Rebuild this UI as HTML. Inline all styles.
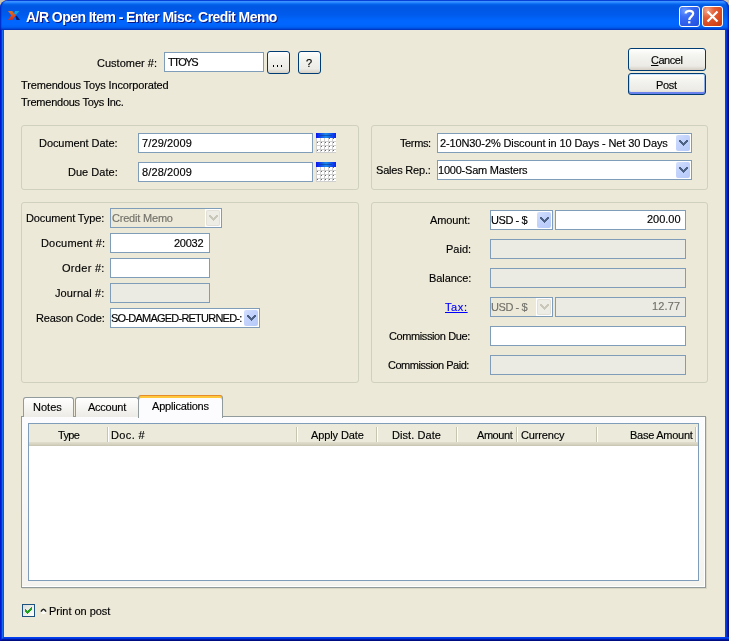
<!DOCTYPE html>
<html><head><meta charset="utf-8"><style>
*{margin:0;padding:0;box-sizing:border-box}
html,body{width:729px;height:641px;overflow:hidden;background:#c8c2ae}
body{position:relative;font-family:"Liberation Sans",sans-serif;font-size:11px;color:#000}
.a{position:absolute}
#win{position:absolute;left:0;top:0;width:729px;height:641px;border-radius:8px 8px 0 0;overflow:hidden;
 background:linear-gradient(to right,#0019cf 0,#0019cf 1px,#0831d9 1px,#0831d9 2px,#166aee 2px,#166aee 3px,#0855dd 3px,#0855dd 4px,transparent 4px,transparent 725px,#0040f0 725px,#0040f0 726px,#0036dc 726px,#0036dc 727px,#0018a8 727px,#0018a8 728px,#000d80 728px)}
#title{position:absolute;left:0;top:0;width:729px;height:30px;background:linear-gradient(to bottom,#0841d8 0px,#0841d8 1px,#3a92ff 1px,#3a92ff 2px,#2a86ff 2px,#2a86ff 3px,#1272f6 3px,#1272f6 4px,#0462ea 4px,#0462ea 5px,#005be5 5px,#005be5 6px,#0058e4 6px,#0058e4 7px,#0057e4 7px,#0057e4 8px,#0057e5 8px,#0057e5 9px,#0058e6 9px,#0058e6 10px,#0058e7 10px,#0058e7 11px,#0059e8 11px,#0059e8 12px,#005ae9 12px,#005ae9 13px,#005aeb 13px,#005aeb 14px,#005bec 14px,#005bec 15px,#005cee 15px,#005cee 16px,#005ef1 16px,#005ef1 17px,#0060f4 17px,#0060f4 18px,#0062f8 18px,#0062f8 19px,#0064fb 19px,#0064fb 20px,#0066fe 20px,#0066fe 21px,#0066ff 21px,#0066ff 22px,#0066ff 22px,#0066ff 23px,#0066ff 23px,#0066ff 24px,#0066fe 24px,#0066fe 25px,#0064fb 25px,#0064fb 26px,#0062f6 26px,#0062f6 27px,#005aec 27px,#005aec 28px,#004cdc 28px,#004cdc 29px,#0038c4 29px,#0038c4 30px)}
#titletxt{position:absolute;left:26px;top:9px;font-weight:bold;font-size:14px;letter-spacing:-0.55px;color:#fff;white-space:nowrap;text-shadow:1px 1px 0 #0a1883;line-height:16px;will-change:transform}
#bottom{position:absolute;left:0;top:637px;width:729px;height:4px;clip-path:polygon(4px 0,100% 0,100% 100%,0 100%);background:linear-gradient(to bottom,#0040f0 0,#0040f0 1px,#0036dc 1px,#0036dc 2px,#0018a8 2px,#0018a8 3px,#000d80 3px)}
#client{position:absolute;left:4px;top:30px;width:721px;height:607px;background:#ece9d8}
.t{position:absolute;white-space:nowrap;line-height:13px;font-size:11px;letter-spacing:-0.2px;will-change:transform;-webkit-text-stroke:0.15px currentColor}
.grp{position:absolute;border:1px solid #d0d0bf;border-radius:3px}
.inp{position:absolute;background:#fff;border:1px solid #7f9db9}
.dis{background:#ebebe4}
.disc{background:#ece9d8}
.btn{position:absolute;border:1px solid #003c74;border-radius:3px;background:linear-gradient(to bottom,#fff 0,#f4f4f0 30%,#ecebe6 80%,#d6d0c5 100%);text-align:center}
.def{box-shadow:inset 0 1px 0 #cee7ff,inset 0 -2px 0 #6982ee,inset 1px 0 0 #bcd4f6,inset -1px 0 0 #89ade4}
.cal{width:20px;height:20px;background:
 linear-gradient(to bottom,#0a20e8 0,#1a70f0 2px,#0a40f0 4px,transparent 4px),
 repeating-linear-gradient(to right,#b9b9b9 0,#b9b9b9 1px,transparent 1px,transparent 4px),
 repeating-linear-gradient(to bottom,#fff 0,#fff 3px,#b9b9b9 3px,#b9b9b9 4px)}
.cbb{width:14px;height:16px;border-radius:2px;background:linear-gradient(135deg,#d4e0fd 0,#c3d3fc 40%,#b6c9f8 100%)}
.cbbd{width:14px;height:16px;border-radius:2px;background:#eeede5;box-shadow:inset 0 0 0 1px #e3e1d7}
.pane{border:1px solid #919b9c;background:linear-gradient(to bottom,#fcfcfe,#f4f3ee);box-shadow:inset -1px -1px 0 #fff,1px 1px 0 #d9d6c6}
.tab{border:1px solid #919b9c;border-bottom:none;border-radius:3px 3px 0 0;background:linear-gradient(to bottom,#fff,#ecebe6)}
.tabs{border:1px solid #919b9c;border-bottom:none;border-top:none;border-radius:3px 3px 0 0;background:#fcfcfe;box-shadow:inset 0 1px 0 #e68b2c,inset 0 2px 0 #ffc73c,inset 0 3px 0 #ffc73c}
.hdr{background:linear-gradient(to bottom,#ebeadb 0,#ebeadb 18px,#e2decd 18px,#d9d5c3 20px,#c6c3b2 22px)}
.sep{top:427px;width:2px;height:15px;border-left:1px solid #c7c5b2;background:#fff}
.chk{width:13px;height:13px;border:1px solid #1c5180;background:linear-gradient(135deg,#dcdcd7,#fff)}
.capb{position:absolute;width:21px;height:21px;border:1px solid #fff;border-radius:3px}
</style></head><body>
<div id="win"><div id="title"></div>
<div class="a" style="left:0;top:0;width:729px;height:30px;border-radius:8px 8px 0 0;box-shadow:inset 1px 0 0 rgba(0,20,180,0.55),inset 2px 0 0 rgba(0,30,200,0.25),inset -1px 0 0 rgba(0,20,180,0.6),inset -2px 0 0 rgba(0,30,200,0.3)"></div>
<div id="titletxt">A/R Open Item - Enter Misc. Credit Memo</div>
<svg class="a" style="left:0;top:0" width="30" height="30" viewBox="0 0 30 30">
  <defs><linearGradient id="og" x1="0" y1="0" x2="0" y2="1"><stop offset="0" stop-color="#e07420"/><stop offset="1" stop-color="#d42a1a"/></linearGradient></defs>
  <polygon points="8,11 12.2,11 15.8,15.5 12.2,20 8,20 11.3,15.5" fill="url(#og)"/>
  <polygon points="15,11 19.5,11 16,15 14,13.5" fill="#14a0d8"/>
  <polygon points="15.5,16.5 16.8,15.8 20,20 16.5,20" fill="#0a1a70"/>
 </svg>
 <div class="capb" style="left:679px;top:6px;background:radial-gradient(circle at 25% 20%,#6b9bff 0,#3d6ef5 30%,#2a5ae8 70%,#2350d8 100%)"></div>
 <svg class="a" style="left:679px;top:6px" width="21" height="21" viewBox="0 0 21 21"><path d="M6.6,7.6 C6.6,3.9 14.2,3.9 14.2,7.6 C14.2,10.2 10.3,10.6 10.3,14" fill="none" stroke="#fff" stroke-width="2.2"/><rect x="9.1" y="15.2" width="2.3" height="2.2" fill="#fff"/></svg>
 <div class="capb" style="left:702px;top:6px;background:radial-gradient(circle at 22% 18%,#f2a58a 0,#e45c34 35%,#d8461c 70%,#c43a0e 100%)"></div>
 <svg class="a" style="left:702px;top:6px" width="21" height="21" viewBox="0 0 21 21"><path d="M5.5,5.5 L15.5,15.5 M15.5,5.5 L5.5,15.5" stroke="#fff" stroke-width="2.2"/></svg>
<div id="client"></div><div id="bottom"></div></div>
<div id="kCustomer67" class="t" style="right:572.42px;top:57px;letter-spacing:0.010px;">Customer #:</div>
<div class="inp" style="left:164px;top:52px;width:100px;height:20px;"></div>
<div id="kTTOYS66" class="t" style="left:167.86px;top:56px;letter-spacing:-1.475px;">TTOYS</div>
<div class="btn" style="left:267px;top:51px;width:23px;height:23px;"></div>
<div class="a" style="left:273px;top:65px;width:1px;height:2px;background:#000"></div><div class="a" style="left:277px;top:65px;width:1px;height:2px;background:#000"></div><div class="a" style="left:281px;top:65px;width:1px;height:2px;background:#000"></div>
<div class="btn" style="left:298px;top:51px;width:23px;height:23px;"></div>
<div id="k67" class="t" style="left:306.00px;top:57px;letter-spacing:-0.200px;">?</div>
<div id="kTremendousToysIncorp89" class="t" style="left:21.14px;top:79px;letter-spacing:-0.147px;">Tremendous Toys Incorporated</div>
<div id="kTremendousToysInc106" class="t" style="left:21.42px;top:96px;letter-spacing:-0.247px;">Tremendous Toys Inc.</div>
<div class="btn" style="left:628px;top:48px;width:78px;height:23px;"></div>
<div id="kuCuancel64" class="t" style="left:650.79px;top:54px;letter-spacing:-0.476px;"><u>C</u>ancel</div>
<div class="btn def" style="left:628px;top:73px;width:78px;height:22px;"></div>
<div id="kPost89" class="t" style="left:655.65px;top:79px;letter-spacing:-0.300px;">Post</div>
<div class="grp" style="left:21px;top:125px;width:338px;height:65px;"></div>
<div id="kDocumentDate147" class="t" style="right:611.05px;top:137px;letter-spacing:-0.066px;">Document Date:</div>
<div class="inp" style="left:138px;top:133px;width:175px;height:20px;"></div>
<div id="k7292009147" class="t" style="left:142.00px;top:137px;letter-spacing:0.115px;">7/29/2009</div>
<svg class="a" style="left:316px;top:133px" width="20" height="20" shape-rendering="crispEdges"><defs><linearGradient id="cgh" x1="0" y1="0" x2="1" y2="0"><stop offset="0" stop-color="#0a14ee"/><stop offset="0.5" stop-color="#1c8ce8"/><stop offset="1" stop-color="#0a20f0"/></linearGradient></defs><rect x="0" y="0" width="20" height="20" fill="#fff"/><rect x="0" y="0" width="20" height="5" fill="url(#cgh)"/><rect x="3" y="2" width="13" height="1" fill="#0a3a90" opacity="0.6"/><rect x="0" y="5" width="1" height="15" fill="#cfcfcf"/><rect x="4" y="5" width="1" height="15" fill="#cfcfcf"/><rect x="8" y="5" width="1" height="15" fill="#cfcfcf"/><rect x="12" y="5" width="1" height="15" fill="#cfcfcf"/><rect x="16" y="5" width="1" height="15" fill="#cfcfcf"/><rect x="0" y="8" width="20" height="1" fill="#cfcfcf"/><rect x="0" y="12" width="20" height="1" fill="#cfcfcf"/><rect x="0" y="16" width="20" height="1" fill="#cfcfcf"/><rect x="0" y="19" width="20" height="1" fill="#cfcfcf"/><rect x="13" y="5" width="1" height="1" fill="#6a6a6a"/><rect x="17" y="5" width="1" height="1" fill="#6a6a6a"/><rect x="1" y="9" width="1" height="1" fill="#6a6a6a"/><rect x="5" y="9" width="1" height="1" fill="#6a6a6a"/><rect x="9" y="9" width="1" height="1" fill="#6a6a6a"/><rect x="13" y="9" width="1" height="1" fill="#6a6a6a"/><rect x="17" y="9" width="1" height="1" fill="#6a6a6a"/><rect x="5" y="13" width="1" height="1" fill="#6a6a6a"/><rect x="9" y="13" width="1" height="1" fill="#6a6a6a"/><rect x="13" y="13" width="1" height="1" fill="#6a6a6a"/><rect x="17" y="13" width="1" height="1" fill="#6a6a6a"/><rect x="1" y="17" width="1" height="1" fill="#6a6a6a"/><rect x="5" y="17" width="1" height="1" fill="#6a6a6a"/><rect x="9" y="17" width="1" height="1" fill="#6a6a6a"/><rect x="13" y="17" width="1" height="1" fill="#6a6a6a"/><rect x="17" y="17" width="1" height="1" fill="#6a6a6a"/></svg>
<div id="kDueDate176" class="t" style="right:611.05px;top:166px;letter-spacing:0.025px;">Due Date:</div>
<div class="inp" style="left:138px;top:162px;width:175px;height:20px;"></div>
<div id="k8282009176" class="t" style="left:142.00px;top:166px;letter-spacing:0.115px;">8/28/2009</div>
<svg class="a" style="left:316px;top:162px" width="20" height="20" shape-rendering="crispEdges"><defs><linearGradient id="cgh2" x1="0" y1="0" x2="1" y2="0"><stop offset="0" stop-color="#0a14ee"/><stop offset="0.5" stop-color="#1c8ce8"/><stop offset="1" stop-color="#0a20f0"/></linearGradient></defs><rect x="0" y="0" width="20" height="20" fill="#fff"/><rect x="0" y="0" width="20" height="5" fill="url(#cgh2)"/><rect x="3" y="2" width="13" height="1" fill="#0a3a90" opacity="0.6"/><rect x="0" y="5" width="1" height="15" fill="#cfcfcf"/><rect x="4" y="5" width="1" height="15" fill="#cfcfcf"/><rect x="8" y="5" width="1" height="15" fill="#cfcfcf"/><rect x="12" y="5" width="1" height="15" fill="#cfcfcf"/><rect x="16" y="5" width="1" height="15" fill="#cfcfcf"/><rect x="0" y="8" width="20" height="1" fill="#cfcfcf"/><rect x="0" y="12" width="20" height="1" fill="#cfcfcf"/><rect x="0" y="16" width="20" height="1" fill="#cfcfcf"/><rect x="0" y="19" width="20" height="1" fill="#cfcfcf"/><rect x="13" y="5" width="1" height="1" fill="#6a6a6a"/><rect x="17" y="5" width="1" height="1" fill="#6a6a6a"/><rect x="1" y="9" width="1" height="1" fill="#6a6a6a"/><rect x="5" y="9" width="1" height="1" fill="#6a6a6a"/><rect x="9" y="9" width="1" height="1" fill="#6a6a6a"/><rect x="13" y="9" width="1" height="1" fill="#6a6a6a"/><rect x="17" y="9" width="1" height="1" fill="#6a6a6a"/><rect x="5" y="13" width="1" height="1" fill="#6a6a6a"/><rect x="9" y="13" width="1" height="1" fill="#6a6a6a"/><rect x="13" y="13" width="1" height="1" fill="#6a6a6a"/><rect x="17" y="13" width="1" height="1" fill="#6a6a6a"/><rect x="1" y="17" width="1" height="1" fill="#6a6a6a"/><rect x="5" y="17" width="1" height="1" fill="#6a6a6a"/><rect x="9" y="17" width="1" height="1" fill="#6a6a6a"/><rect x="13" y="17" width="1" height="1" fill="#6a6a6a"/><rect x="17" y="17" width="1" height="1" fill="#6a6a6a"/></svg>
<div class="grp" style="left:371px;top:125px;width:337px;height:65px;"></div>
<div id="kTerms147" class="t" style="right:298.05px;top:137px;letter-spacing:-0.380px;">Terms:</div>
<div class="inp" style="left:437px;top:133px;width:255px;height:20px;"></div>
<div class="cbb a" style="left:676px;top:135px"><svg width="9" height="6" style="position:absolute;left:3px;top:5px" shape-rendering="crispEdges" fill="#4d6185"><rect x="0" y="0" width="1" height="1"/><rect x="1" y="0" width="1" height="1"/><rect x="7" y="0" width="1" height="1"/><rect x="8" y="0" width="1" height="1"/><rect x="0" y="1" width="1" height="1"/><rect x="1" y="1" width="1" height="1"/><rect x="2" y="1" width="1" height="1"/><rect x="6" y="1" width="1" height="1"/><rect x="7" y="1" width="1" height="1"/><rect x="8" y="1" width="1" height="1"/><rect x="1" y="2" width="1" height="1"/><rect x="2" y="2" width="1" height="1"/><rect x="3" y="2" width="1" height="1"/><rect x="5" y="2" width="1" height="1"/><rect x="6" y="2" width="1" height="1"/><rect x="7" y="2" width="1" height="1"/><rect x="2" y="3" width="1" height="1"/><rect x="3" y="3" width="1" height="1"/><rect x="4" y="3" width="1" height="1"/><rect x="5" y="3" width="1" height="1"/><rect x="6" y="3" width="1" height="1"/><rect x="3" y="4" width="1" height="1"/><rect x="4" y="4" width="1" height="1"/><rect x="5" y="4" width="1" height="1"/><rect x="4" y="5" width="1" height="1"/></svg></div>
<div id="k210N302Discountin10D147" class="t" style="left:439.65px;top:137px;letter-spacing:-0.120px;">2-10N30-2% Discount in 10 Days - Net 30 Days</div>
<div id="kSalesRep174" class="t" style="right:298.05px;top:164px;letter-spacing:-0.200px;">Sales Rep.:</div>
<div class="inp" style="left:437px;top:160px;width:255px;height:20px;"></div>
<div class="cbb a" style="left:676px;top:162px"><svg width="9" height="6" style="position:absolute;left:3px;top:5px" shape-rendering="crispEdges" fill="#4d6185"><rect x="0" y="0" width="1" height="1"/><rect x="1" y="0" width="1" height="1"/><rect x="7" y="0" width="1" height="1"/><rect x="8" y="0" width="1" height="1"/><rect x="0" y="1" width="1" height="1"/><rect x="1" y="1" width="1" height="1"/><rect x="2" y="1" width="1" height="1"/><rect x="6" y="1" width="1" height="1"/><rect x="7" y="1" width="1" height="1"/><rect x="8" y="1" width="1" height="1"/><rect x="1" y="2" width="1" height="1"/><rect x="2" y="2" width="1" height="1"/><rect x="3" y="2" width="1" height="1"/><rect x="5" y="2" width="1" height="1"/><rect x="6" y="2" width="1" height="1"/><rect x="7" y="2" width="1" height="1"/><rect x="2" y="3" width="1" height="1"/><rect x="3" y="3" width="1" height="1"/><rect x="4" y="3" width="1" height="1"/><rect x="5" y="3" width="1" height="1"/><rect x="6" y="3" width="1" height="1"/><rect x="3" y="4" width="1" height="1"/><rect x="4" y="4" width="1" height="1"/><rect x="5" y="4" width="1" height="1"/><rect x="4" y="5" width="1" height="1"/></svg></div>
<div id="k1000SamMasters174" class="t" style="left:438.46px;top:164px;letter-spacing:-0.224px;">1000-Sam Masters</div>
<div class="grp" style="left:21px;top:202px;width:338px;height:181px;"></div>
<div id="kDocumentType222" class="t" style="right:624.68px;top:212px;letter-spacing:-0.126px;">Document Type:</div>
<div class="inp disc" style="left:110px;top:208px;width:112px;height:20px;"></div>
<div class="a" style="left:205px;top:209px;width:16px;height:18px;background:#fff"></div>
<div class="cbbd a" style="left:206px;top:210px"><svg width="9" height="6" style="position:absolute;left:3px;top:5px" shape-rendering="crispEdges" fill="#c9c7ba"><rect x="0" y="0" width="1" height="1"/><rect x="1" y="0" width="1" height="1"/><rect x="7" y="0" width="1" height="1"/><rect x="8" y="0" width="1" height="1"/><rect x="0" y="1" width="1" height="1"/><rect x="1" y="1" width="1" height="1"/><rect x="2" y="1" width="1" height="1"/><rect x="6" y="1" width="1" height="1"/><rect x="7" y="1" width="1" height="1"/><rect x="8" y="1" width="1" height="1"/><rect x="1" y="2" width="1" height="1"/><rect x="2" y="2" width="1" height="1"/><rect x="3" y="2" width="1" height="1"/><rect x="5" y="2" width="1" height="1"/><rect x="6" y="2" width="1" height="1"/><rect x="7" y="2" width="1" height="1"/><rect x="2" y="3" width="1" height="1"/><rect x="3" y="3" width="1" height="1"/><rect x="4" y="3" width="1" height="1"/><rect x="5" y="3" width="1" height="1"/><rect x="6" y="3" width="1" height="1"/><rect x="3" y="4" width="1" height="1"/><rect x="4" y="4" width="1" height="1"/><rect x="5" y="4" width="1" height="1"/><rect x="4" y="5" width="1" height="1"/></svg></div>
<div id="kCreditMemo222" class="t" style="left:111.60px;top:212px;letter-spacing:-0.200px;color:#72716a;">Credit Memo</div>
<div id="kDocument247" class="t" style="right:623.98px;top:237px;letter-spacing:0.178px;">Document #:</div>
<div class="inp" style="left:110px;top:233px;width:100px;height:20px;"></div>
<div id="k20032247" class="t" style="right:525.40px;top:237px;letter-spacing:-0.260px;">20032</div>
<div id="kOrder272" class="t" style="right:624.68px;top:262px;letter-spacing:0.297px;">Order #:</div>
<div class="inp" style="left:110px;top:258px;width:100px;height:20px;"></div>
<div id="kJournal297" class="t" style="right:624.68px;top:287px;letter-spacing:0.120px;">Journal #:</div>
<div class="inp dis" style="left:110px;top:283px;width:100px;height:20px;"></div>
<div id="kReasonCode322" class="t" style="right:624.68px;top:312px;letter-spacing:-0.135px;">Reason Code:</div>
<div class="inp" style="left:110px;top:308px;width:150px;height:20px;"></div>
<div class="cbb a" style="left:244px;top:310px"><svg width="9" height="6" style="position:absolute;left:3px;top:5px" shape-rendering="crispEdges" fill="#4d6185"><rect x="0" y="0" width="1" height="1"/><rect x="1" y="0" width="1" height="1"/><rect x="7" y="0" width="1" height="1"/><rect x="8" y="0" width="1" height="1"/><rect x="0" y="1" width="1" height="1"/><rect x="1" y="1" width="1" height="1"/><rect x="2" y="1" width="1" height="1"/><rect x="6" y="1" width="1" height="1"/><rect x="7" y="1" width="1" height="1"/><rect x="8" y="1" width="1" height="1"/><rect x="1" y="2" width="1" height="1"/><rect x="2" y="2" width="1" height="1"/><rect x="3" y="2" width="1" height="1"/><rect x="5" y="2" width="1" height="1"/><rect x="6" y="2" width="1" height="1"/><rect x="7" y="2" width="1" height="1"/><rect x="2" y="3" width="1" height="1"/><rect x="3" y="3" width="1" height="1"/><rect x="4" y="3" width="1" height="1"/><rect x="5" y="3" width="1" height="1"/><rect x="6" y="3" width="1" height="1"/><rect x="3" y="4" width="1" height="1"/><rect x="4" y="4" width="1" height="1"/><rect x="5" y="4" width="1" height="1"/><rect x="4" y="5" width="1" height="1"/></svg></div>
<div class="a" style="left:111px;top:309px;width:132px;height:18px;overflow:hidden"><div id="kSODAMAGEDRETURNED322" class="t" style="position:fixed;left:111.41px;top:312px;letter-spacing:-0.769px;">SO-DAMAGED-RETURNED-:</div>
</div>
<div class="grp" style="left:371px;top:202px;width:337px;height:181px;"></div>
<div id="kAmount224" class="t" style="right:258.84px;top:214px;letter-spacing:-0.100px;">Amount:</div>
<div class="inp" style="left:490px;top:210px;width:63px;height:20px;"></div>
<div class="cbb a" style="left:537px;top:212px"><svg width="9" height="6" style="position:absolute;left:3px;top:5px" shape-rendering="crispEdges" fill="#4d6185"><rect x="0" y="0" width="1" height="1"/><rect x="1" y="0" width="1" height="1"/><rect x="7" y="0" width="1" height="1"/><rect x="8" y="0" width="1" height="1"/><rect x="0" y="1" width="1" height="1"/><rect x="1" y="1" width="1" height="1"/><rect x="2" y="1" width="1" height="1"/><rect x="6" y="1" width="1" height="1"/><rect x="7" y="1" width="1" height="1"/><rect x="8" y="1" width="1" height="1"/><rect x="1" y="2" width="1" height="1"/><rect x="2" y="2" width="1" height="1"/><rect x="3" y="2" width="1" height="1"/><rect x="5" y="2" width="1" height="1"/><rect x="6" y="2" width="1" height="1"/><rect x="7" y="2" width="1" height="1"/><rect x="2" y="3" width="1" height="1"/><rect x="3" y="3" width="1" height="1"/><rect x="4" y="3" width="1" height="1"/><rect x="5" y="3" width="1" height="1"/><rect x="6" y="3" width="1" height="1"/><rect x="3" y="4" width="1" height="1"/><rect x="4" y="4" width="1" height="1"/><rect x="5" y="4" width="1" height="1"/><rect x="4" y="5" width="1" height="1"/></svg></div>
<div id="kUSD224" class="t" style="left:491.32px;top:214px;letter-spacing:-0.430px;">USD - $</div>
<div class="inp" style="left:555px;top:210px;width:131px;height:20px;"></div>
<div id="k20000223" class="t" style="right:48.40px;top:213px;letter-spacing:-0.020px;">200.00</div>
<div id="kPaid253" class="t" style="right:258.14px;top:243px;letter-spacing:0.025px;">Paid:</div>
<div class="inp dis" style="left:490px;top:239px;width:196px;height:20px;"></div>
<div id="kBalance282" class="t" style="right:258.14px;top:272px;letter-spacing:-0.071px;">Balance:</div>
<div class="inp dis" style="left:490px;top:268px;width:196px;height:20px;"></div>
<div id="kTax311" class="t" style="right:261.30px;top:301px;letter-spacing:0.620px;color:#0000ff;text-decoration:underline">Tax:</div>
<div class="inp disc" style="left:490px;top:297px;width:63px;height:20px;"></div>
<div class="a" style="left:536px;top:298px;width:16px;height:18px;background:#fff"></div>
<div class="cbbd a" style="left:537px;top:299px"><svg width="9" height="6" style="position:absolute;left:3px;top:5px" shape-rendering="crispEdges" fill="#c9c7ba"><rect x="0" y="0" width="1" height="1"/><rect x="1" y="0" width="1" height="1"/><rect x="7" y="0" width="1" height="1"/><rect x="8" y="0" width="1" height="1"/><rect x="0" y="1" width="1" height="1"/><rect x="1" y="1" width="1" height="1"/><rect x="2" y="1" width="1" height="1"/><rect x="6" y="1" width="1" height="1"/><rect x="7" y="1" width="1" height="1"/><rect x="8" y="1" width="1" height="1"/><rect x="1" y="2" width="1" height="1"/><rect x="2" y="2" width="1" height="1"/><rect x="3" y="2" width="1" height="1"/><rect x="5" y="2" width="1" height="1"/><rect x="6" y="2" width="1" height="1"/><rect x="7" y="2" width="1" height="1"/><rect x="2" y="3" width="1" height="1"/><rect x="3" y="3" width="1" height="1"/><rect x="4" y="3" width="1" height="1"/><rect x="5" y="3" width="1" height="1"/><rect x="6" y="3" width="1" height="1"/><rect x="3" y="4" width="1" height="1"/><rect x="4" y="4" width="1" height="1"/><rect x="5" y="4" width="1" height="1"/><rect x="4" y="5" width="1" height="1"/></svg></div>
<div id="kUSD311" class="t" style="left:491.32px;top:301px;letter-spacing:-0.430px;color:#72716a;">USD - $</div>
<div class="inp dis" style="left:555px;top:297px;width:131px;height:20px;"></div>
<div id="k1277310" class="t" style="right:48.40px;top:300px;letter-spacing:0.175px;color:#72716a">12.77</div>
<div id="kCommissionDue340" class="t" style="right:258.84px;top:330px;letter-spacing:-0.401px;">Commission Due:</div>
<div class="inp" style="left:490px;top:326px;width:196px;height:20px;"></div>
<div id="kCommissionPaid369" class="t" style="right:259.68px;top:359px;letter-spacing:-0.484px;">Commission Paid:</div>
<div class="inp dis" style="left:490px;top:355px;width:196px;height:20px;"></div>
<div class="pane a" style="left:21px;top:416px;width:685px;height:172px;"></div>
<div class="tab a" style="left:23px;top:397px;width:51px;height:20px;"></div>
<div id="kNotes411" class="t" style="left:32.86px;top:401px;letter-spacing:0.010px;">Notes</div>
<div class="tab a" style="left:75px;top:397px;width:64px;height:20px;"></div>
<div id="kAccount411" class="t" style="left:87.72px;top:401px;letter-spacing:-0.260px;">Account</div>
<div class="tabs a" style="left:138px;top:395px;width:85px;height:23px;"></div>
<div id="kApplications410" class="t" style="left:152.42px;top:400px;letter-spacing:-0.211px;">Applications</div>
<div class="inp" style="left:28px;top:423px;width:671px;height:158px;"></div>
<div class="hdr a" style="left:29px;top:424px;width:669px;height:22px;"></div>
<div class="sep a" style="left:107px"></div>
<div class="sep a" style="left:296px"></div>
<div class="sep a" style="left:376px"></div>
<div class="sep a" style="left:456px"></div>
<div class="sep a" style="left:516px"></div>
<div class="sep a" style="left:596px"></div>
<div class="sep a" style="left:695px"></div>
<div id="kType439" class="t" style="left:57.68px;top:429px;letter-spacing:-0.680px;">Type</div>
<div id="kDoc439" class="t" style="left:111.04px;top:429px;letter-spacing:0.364px;">Doc. #</div>
<div id="kApplyDate439" class="t" style="left:310.79px;top:429px;letter-spacing:-0.113px;">Apply Date</div>
<div id="kDistDate439" class="t" style="left:392.30px;top:429px;letter-spacing:0.067px;">Dist. Date</div>
<div id="kAmount439" class="t" style="right:216.40px;top:429px;letter-spacing:-0.440px;">Amount</div>
<div id="kBaseAmount439" class="t" style="right:36.40px;top:429px;letter-spacing:-0.260px;">Base Amount</div>
<div id="kCurrency439" class="t" style="left:521.21px;top:429px;letter-spacing:-0.149px;">Currency</div>
<div class="chk a" style="left:22px;top:604px;width:13px;height:13px;"></div>
<svg class="a" style="left:25px;top:607px" width="7" height="7" fill="#21a121" shape-rendering="crispEdges"><rect x="6" y="0" width="1" height="1"/><rect x="5" y="1" width="1" height="1"/><rect x="6" y="1" width="1" height="1"/><rect x="0" y="2" width="1" height="1"/><rect x="4" y="2" width="1" height="1"/><rect x="5" y="2" width="1" height="1"/><rect x="6" y="2" width="1" height="1"/><rect x="0" y="3" width="1" height="1"/><rect x="1" y="3" width="1" height="1"/><rect x="3" y="3" width="1" height="1"/><rect x="4" y="3" width="1" height="1"/><rect x="5" y="3" width="1" height="1"/><rect x="0" y="4" width="1" height="1"/><rect x="1" y="4" width="1" height="1"/><rect x="2" y="4" width="1" height="1"/><rect x="3" y="4" width="1" height="1"/><rect x="4" y="4" width="1" height="1"/><rect x="1" y="5" width="1" height="1"/><rect x="2" y="5" width="1" height="1"/><rect x="3" y="5" width="1" height="1"/><rect x="2" y="6" width="1" height="1"/></svg>
<svg class="a" style="left:39px;top:605px" width="9" height="10" viewBox="0 0 9 10"><ellipse cx="4.5" cy="7" rx="2.6" ry="2.2" fill="#fafaf6"/><path d="M2,6.6 Q4.5,1.8 7,6.6" fill="none" stroke="#222" stroke-width="1.5"/></svg>
<div id="kPrintonpost615" class="t" style="left:48.51px;top:605px;letter-spacing:-0.035px;">Print on post</div>
</body></html>
